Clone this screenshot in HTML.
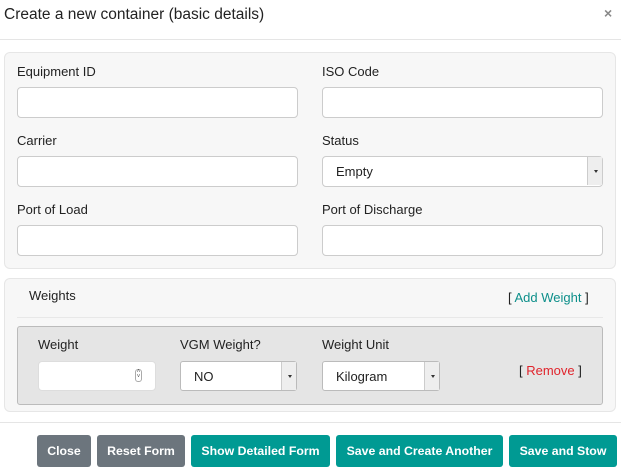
<!DOCTYPE html>
<html><head><style>
*{box-sizing:border-box;margin:0;padding:0}
body{width:621px;height:473px;background:#fff;font-family:"Liberation Sans",sans-serif;color:#222;position:relative;overflow:hidden;font-size:13px}
.a{position:absolute}
.inp{position:absolute;background:#fff;border:1px solid #ccc;border-radius:4px;height:31px}
.lbl{position:absolute;font-size:13px;color:#222}
.sel{position:absolute;background:#fff;border:1px solid #bbb;border-radius:3px;height:30px;font-size:13px;padding:7px 0 0 13px}
.sel:after{content:"";position:absolute;right:0;top:0;width:14px;height:28px;background:#eee;border-left:1px solid #ccc}
.sel:before{content:"";position:absolute;right:4px;top:13px;border-left:2.5px solid transparent;border-right:2.5px solid transparent;border-top:3px solid #333;z-index:2}
.btn{position:absolute;top:435px;height:32px;border-radius:3px;color:#fff;font-weight:bold;font-size:12.3px;text-align:center;line-height:32px}
.g{background:#6c757d}.t{background:#009a93}
</style></head><body>
<div class="a" style="left:4px;top:6px;font-size:15.5px;color:#222">Create a new container (basic details)</div>
<div class="a" style="left:604px;top:5px;font-size:14px;font-weight:bold;color:#888">×</div>
<div class="a" style="left:0;top:39px;width:621px;height:1px;background:#e5e5e5"></div>
<div class="a" style="left:4px;top:52px;width:612px;height:217px;background:#f7f7f7;border:1px solid #e6e6e6;border-radius:6px"></div>
<div class="lbl" style="left:17px;top:64px">Equipment ID</div>
<div class="lbl" style="left:322px;top:64px">ISO Code</div>
<div class="inp" style="left:17px;top:87px;width:281px"></div>
<div class="inp" style="left:322px;top:87px;width:281px"></div>
<div class="lbl" style="left:17px;top:133px">Carrier</div>
<div class="lbl" style="left:322px;top:133px">Status</div>
<div class="inp" style="left:17px;top:156px;width:281px"></div>
<div class="sel" style="left:322px;top:156px;width:281px;height:31px;border-color:#ccc;border-radius:4px">Empty</div>
<div class="lbl" style="left:17px;top:202px">Port of Load</div>
<div class="lbl" style="left:322px;top:202px">Port of Discharge</div>
<div class="inp" style="left:17px;top:225px;width:281px"></div>
<div class="inp" style="left:322px;top:225px;width:281px"></div>

<div class="a" style="left:4px;top:278px;width:612px;height:134px;background:#f7f7f7;border:1px solid #e6e6e6;border-radius:6px"></div>
<div class="lbl" style="left:29px;top:288px">Weights</div>
<div class="lbl" style="left:508px;top:290px;color:#222">[ <span style="color:#0d8f8a">Add Weight</span> ]</div>
<div class="a" style="left:17px;top:317px;width:586px;height:1px;background:#e8e8e8"></div>
<div class="a" style="left:17px;top:326px;width:586px;height:79px;background:#e5e5e5;border:1px solid #bbb;border-radius:3px"></div>
<div class="lbl" style="left:38px;top:337px">Weight</div>
<div class="lbl" style="left:180px;top:337px">VGM Weight?</div>
<div class="lbl" style="left:322px;top:337px">Weight Unit</div>
<div class="inp" style="left:38px;top:361px;width:118px;height:30px;border-color:#ddd"></div>
<div class="a" style="left:135px;top:369px;width:7px;height:13px;border:1px solid #aaa;border-radius:3px;font-size:6px;line-height:5px;text-align:center;color:#555">˄<br>˅</div>
<div class="sel" style="left:180px;top:361px;width:117px">NO</div>
<div class="sel" style="left:322px;top:361px;width:118px">Kilogram</div>
<div class="lbl" style="left:519px;top:363px">[ <span style="color:#e0242c">Remove</span> ]</div>

<div class="a" style="left:0;top:422px;width:621px;height:1px;background:#e5e5e5"></div>
<div class="btn g" style="left:37px;width:54px">Close</div>
<div class="btn g" style="left:97px;width:88px">Reset Form</div>
<div class="btn t" style="left:191px;width:139px">Show Detailed Form</div>
<div class="btn t" style="left:336px;width:167px">Save and Create Another</div>
<div class="btn t" style="left:509px;width:108px">Save and Stow</div>
</body></html>
